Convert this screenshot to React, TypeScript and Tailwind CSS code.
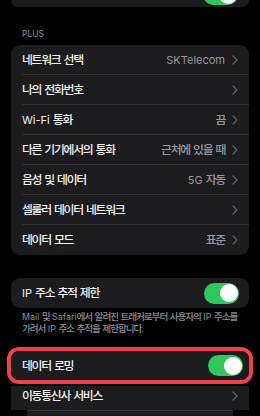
import React from "react";

const HANGUL = /([\u1100-\u11ff\u3130-\u318f\uac00-\ud7af]+)/;

function T({ text }: { text: string }) {
  const parts = text.split(HANGUL).filter((p) => p.length > 0);
  return (
    <>
      {parts.map((p, i) =>
        HANGUL.test(p) ? (
          <span key={i} className="text-[1.08em] tracking-[-0.11em] font-medium">
            {p}
          </span>
        ) : (
          <span key={i}>{p}</span>
        )
      )}
    </>
  );
}

function Chevron() {
  return (
    <svg width="6" height="10" viewBox="0 0 6 10" className="shrink-0">
      <polyline
        points="1,1 5,5 1,9"
        fill="none"
        stroke="#5d5d62"
        strokeWidth="1.4"
        strokeLinecap="round"
        strokeLinejoin="round"
      />
    </svg>
  );
}

function Toggle() {
  return (
    <div className="w-[35px] h-[21px] rounded-full bg-[#30c85a] p-[1.5px] flex justify-end shrink-0">
      <div className="w-[18px] h-[18px] rounded-full bg-white" />
    </div>
  );
}

function Row({
  label,
  value,
  last,
}: {
  label: string;
  value?: string;
  last?: boolean;
}) {
  return (
    <div className="h-[30px] pl-[11px] flex">
      <div
        className={
          "flex-1 flex items-center pr-[11px] " +
          (last ? "" : "border-b border-[#323235]")
        }
      >
        <span className="flex-1 text-[11px] leading-[14px] text-[#f2f2f2] whitespace-nowrap">
          <T text={label} />
        </span>
        {value ? (
          <span className="text-[11px] leading-[14px] text-[#98989e] whitespace-nowrap mr-[7px]">
            <T text={value} />
          </span>
        ) : null}
        <Chevron />
      </div>
    </div>
  );
}

export default function App() {
  return (
    <div className="w-[260px] h-[416px] bg-black overflow-hidden font-['Inter','Noto_Sans_CJK_KR',sans-serif]">
      {/* top card remnant */}
      <div className="mx-[11px] h-[7px] rounded-b-[9px] bg-[#1c1c1e] overflow-hidden flex justify-end items-end pr-[11px] pb-[2px]">
        <Toggle />
      </div>

      {/* PLUS header */}
      <div className="pt-[21px] pb-[5px] px-[22px] h-[38px] text-[8.5px] leading-[12px] text-[#8d8d93]">
        PLUS
      </div>

      {/* main card */}
      <div className="mx-[11px] rounded-[9px] bg-[#1c1c1e] overflow-hidden">
        <Row label="네트워크 선택" value="SKTelecom" />
        <Row label="나의 전화번호" />
        <Row label="Wi-Fi 통화" value="끔" />
        <Row label="다른 기기에서의 통화" value="근처에 있을 때" />
        <Row label="음성 및 데이터" value="5G 자동" />
        <Row label="셀룰러 데이터 네트워크" />
        <Row label="데이터 모드" value="표준" last />
      </div>

      {/* IP tracking card */}
      <div className="mt-[23px] mx-[11px] h-[30px] rounded-[9px] bg-[#1c1c1e] flex items-center pl-[11px] pr-[10px]">
        <span className="flex-1 text-[11px] leading-[14px] text-[#f2f2f2] whitespace-nowrap">
          <T text="IP 주소 추적 제한" />
        </span>
        <Toggle />
      </div>
      <div className="pt-[3px] px-[22px] text-[8.9px] leading-[12px] text-[#8d8d93]">
        <div className="whitespace-nowrap">
          <T text="Mail 및 Safari에서 알려진 트래커로부터 사용자의 IP 주소를" />
        </div>
        <div className="whitespace-nowrap">
          <T text="가려서 IP 주소 추적을 제한합니다." />
        </div>
      </div>

      {/* highlighted roaming */}
      <div className="mt-[12px] mx-[7px] border-[4px] border-[#f2404a] rounded-[12px] overflow-hidden">
        <div className="h-[29px] rounded-[7px] bg-[#1c1c1e] flex items-center pl-[11px] pr-[6px]">
          <span className="flex-1 text-[11px] leading-[14px] text-[#f2f2f2] whitespace-nowrap">
            <T text="데이터 로밍" />
          </span>
          <Toggle />
        </div>
      </div>

      {/* carrier services */}
      <div className="mt-[2px] mx-[11px] h-[24px] bg-[#1c1c1e] flex items-center pb-[4px] pl-[11px] pr-[11px]">
        <span className="flex-1 text-[11px] leading-[14px] text-[#f2f2f2] whitespace-nowrap">
          <T text="이동통신사 서비스" />
        </span>
        <Chevron />
      </div>
      <div className="mx-[27px] w-[206px] h-[8px] border-t border-[#38383b] bg-[#1c1c1e]" />
    </div>
  );
}
